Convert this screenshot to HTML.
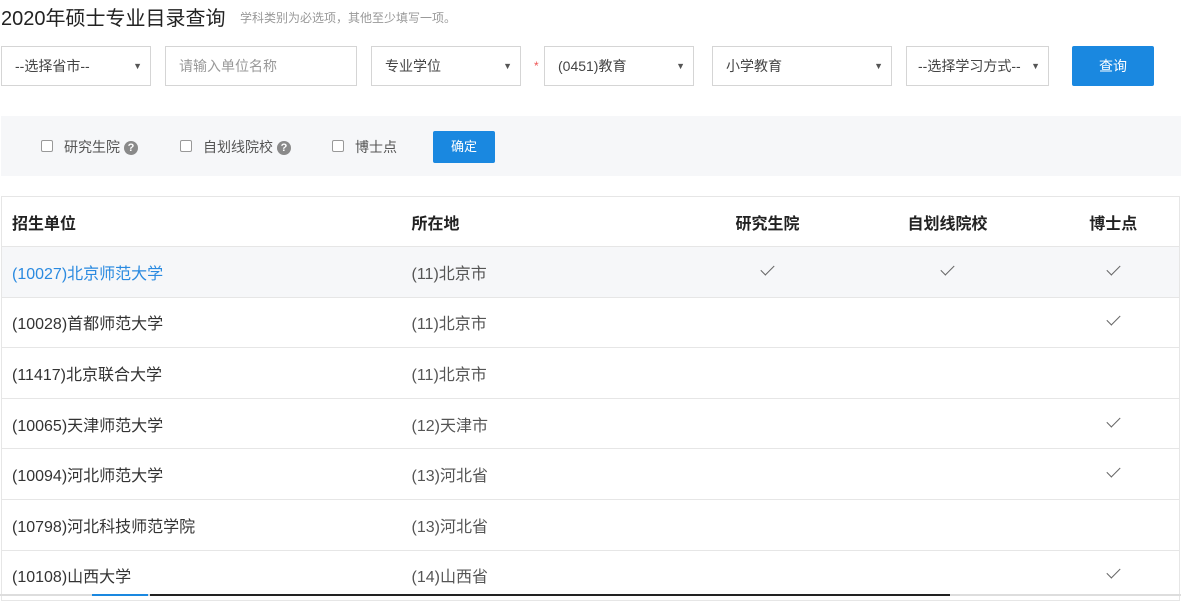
<!DOCTYPE html>
<html><head><meta charset="utf-8"><style>
*{margin:0;padding:0;box-sizing:border-box}
body{width:1181px;height:596px;overflow:hidden;background:#fff;font-family:"Liberation Sans","Noto Sans CJK SC",sans-serif;color:#333;position:relative}
.a{position:absolute}
.sel{position:absolute;top:46px;height:40px;border:1px solid #d5d5d5;background:#fff;font-size:14px;color:#444;line-height:38px;padding-left:13px}
.sel .ar{position:absolute;right:8px;top:0;font-size:9px;color:#555}
.btn{position:absolute;background:#1a88e0;color:#fff;border-radius:2px;text-align:center;font-size:14px}
.cb{position:absolute;top:140px;width:12px;height:12px;border:1px solid #999;border-radius:2px;background:#fff}
.lb{position:absolute;top:137px;font-size:14px;color:#555}
.q{display:inline-block;width:14px;height:14px;border-radius:50%;background:#8a8a8a;color:#fff;font-size:11px;line-height:14px;text-align:center;font-weight:bold;vertical-align:1px;margin-left:4px}
table{position:absolute;left:1px;top:196px;width:1179px;border-collapse:collapse;border:1px solid #e6e6e6}
td,th{height:50.6px;border-top:1px solid #e6e6e6;font-size:16px;text-align:left;padding-left:10px}
th{font-weight:bold;color:#222;height:50px}
.c{text-align:center;padding-left:0;color:#666}
.last{padding-right:14px}
td.l{color:#555}
tr.h td{background:#f6f7f9}
.ck{display:inline-block;width:13px;height:7px;border-left:1.5px solid #666;border-bottom:1.5px solid #666;transform:rotate(-45deg);position:relative;top:-4px}
</style></head><body>
<div class="a" style="left:1px;top:2px;font-size:20px;color:#222">2020年硕士专业目录查询</div>
<div class="a" style="left:240px;top:9px;font-size:12px;color:#999">学科类别为必选项，其他至少填写一项。</div>

<div class="sel" style="left:1px;width:150px">--选择省市--<span class="ar">▼</span></div>
<div class="sel" style="left:165px;width:192px;color:#999">请输入单位名称</div>
<div class="sel" style="left:371px;width:150px">专业学位<span class="ar">▼</span></div>
<div class="a" style="left:534px;top:59px;color:#e55;font-size:12px">*</div>
<div class="sel" style="left:544px;width:150px">(0451)教育<span class="ar">▼</span></div>
<div class="sel" style="left:712px;width:180px">小学教育<span class="ar">▼</span></div>
<div class="sel" style="left:906px;width:143px;padding-left:11px">--选择学习方式--<span class="ar">▼</span></div>
<div class="btn" style="left:1072px;top:46px;width:82px;height:40px;line-height:40px">查询</div>

<div class="a" style="left:1px;top:116px;width:1180px;height:60px;background:#f6f7f9"></div>
<div class="cb" style="left:41px"></div><div class="lb" style="left:64px">研究生院<span class="q">?</span></div>
<div class="cb" style="left:180px"></div><div class="lb" style="left:203px">自划线院校<span class="q">?</span></div>
<div class="cb" style="left:332px"></div><div class="lb" style="left:355px">博士点</div>
<div class="btn" style="left:433px;top:131px;width:62px;height:32px;line-height:32px;font-size:13px">确定</div>

<table>
<tr><th style="width:400px">招生单位</th><th style="width:300px">所在地</th><th class="c" style="width:132px;color:#222">研究生院</th><th class="c" style="width:228px;color:#222">自划线院校</th><th class="c last" style="color:#222">博士点</th></tr>
<tr class="h"><td style="color:#2a8ae0">(10027)北京师范大学</td><td class="l">(11)北京市</td><td class="c"><i class="ck"></i></td><td class="c"><i class="ck"></i></td><td class="c last"><i class="ck"></i></td></tr>
<tr><td>(10028)首都师范大学</td><td class="l">(11)北京市</td><td class="c"></td><td class="c"></td><td class="c last"><i class="ck"></i></td></tr>
<tr><td>(11417)北京联合大学</td><td class="l">(11)北京市</td><td class="c"></td><td class="c"></td><td class="c last"></td></tr>
<tr><td>(10065)天津师范大学</td><td class="l">(12)天津市</td><td class="c"></td><td class="c"></td><td class="c last"><i class="ck"></i></td></tr>
<tr><td>(10094)河北师范大学</td><td class="l">(13)河北省</td><td class="c"></td><td class="c"></td><td class="c last"><i class="ck"></i></td></tr>
<tr><td>(10798)河北科技师范学院</td><td class="l">(13)河北省</td><td class="c"></td><td class="c"></td><td class="c last"></td></tr>
<tr><td>(10108)山西大学</td><td class="l">(14)山西省</td><td class="c"></td><td class="c"></td><td class="c last"><i class="ck"></i></td></tr>
</table>
<div class="a" style="left:0;top:594px;width:1181px;height:2px;background:#ddd"></div>
<div class="a" style="left:92px;top:594px;width:56px;height:2px;background:#1a88e0"></div>
<div class="a" style="left:150px;top:594px;width:800px;height:2px;background:#222"></div>
</body></html>
